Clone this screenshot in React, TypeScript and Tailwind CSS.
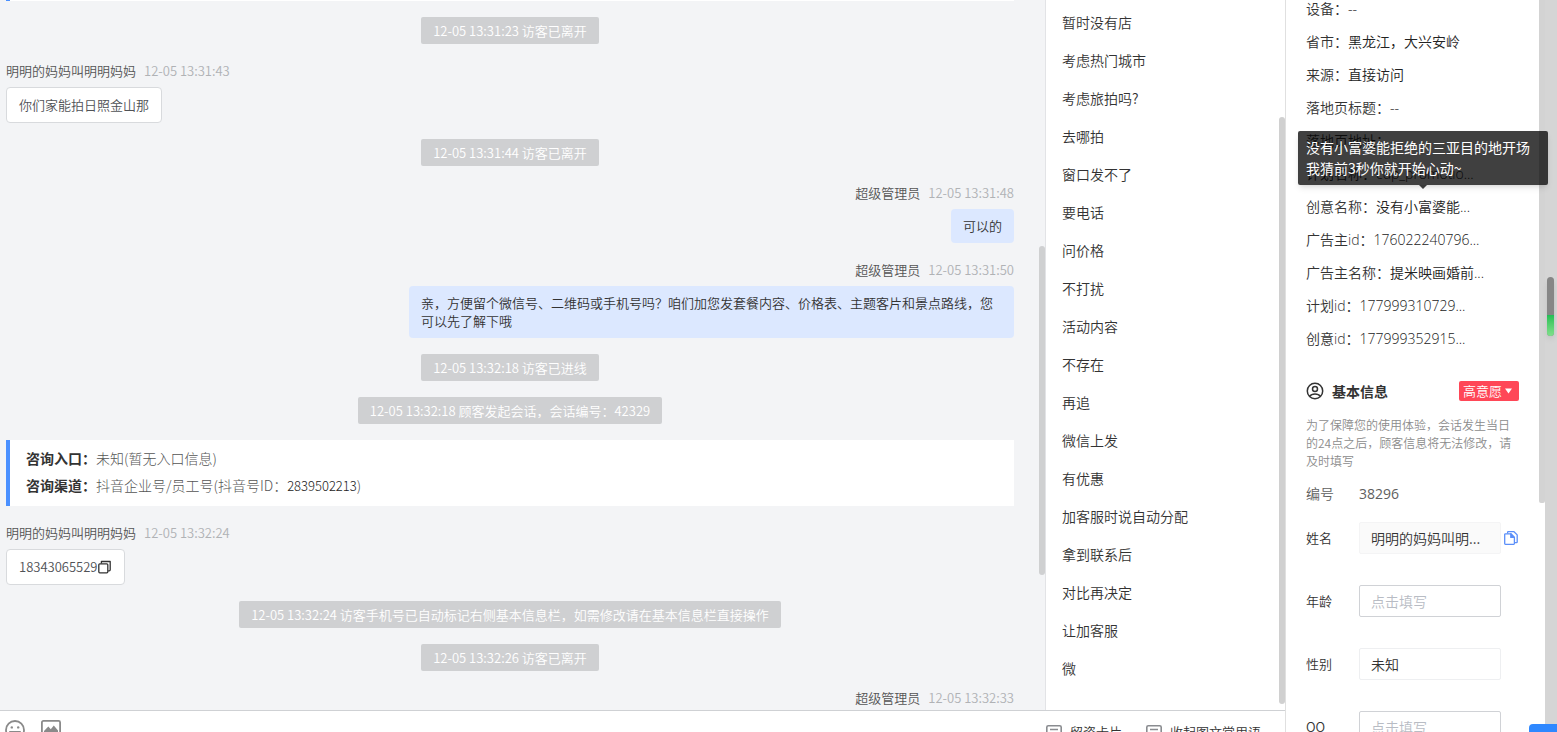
import type { ReactNode } from "react";

const PHRASES = [
  "暂时没有店",
  "考虑热门城市",
  "考虑旅拍吗?",
  "去哪拍",
  "窗口发不了",
  "要电话",
  "问价格",
  "不打扰",
  "活动内容",
  "不存在",
  "再追",
  "微信上发",
  "有优惠",
  "加客服时说自动分配",
  "拿到联系后",
  "对比再决定",
  "让加客服",
  "微",
];

const VISITOR_DETAILS = [
  ["设备", "--"],
  ["省市", "黑龙江，大兴安岭"],
  ["来源", "直接访问"],
  ["落地页标题", "--"],
  ["落地页地址", ""],
  ["计划名称", "cdp_promotio..."],
  ["创意名称", "没有小富婆能..."],
  ["广告主id", "176022240796..."],
  ["广告主名称", "提米映画婚前..."],
  ["计划id", "177999310729..."],
  ["创意id", "177999352915..."],
];

function Notice({ children }: { children: ReactNode }) {
  return (
    <p className="self-center rounded-xs bg-[#cfd0d2] px-3 text-[13px] leading-[27px] text-white">
      {children}
    </p>
  );
}

type MessageProps = {
  author: string;
  time: string;
  mine?: boolean;
  children?: ReactNode;
};

function Message({ author, time, mine = false, children }: MessageProps) {
  return (
    <article className={mine ? "flex flex-col items-end" : "flex flex-col items-start"}>
      <header className="mb-[5px] flex gap-2 text-[13px] leading-[22px]">
        <span className="text-[#555555]">{author}</span>
        <time className="text-[#b0b2b5]">{time}</time>
      </header>
      {children && (
        <div
          className={
            mine
              ? "max-w-[605px] rounded-sm bg-[#dce8ff] px-3 py-2 text-[13px] leading-[18px] text-[#333333]"
              : "flex items-center rounded-sm border border-[#d8dadd] bg-white px-3 py-2 text-[13px] leading-[18px] text-[#505256]"
          }
        >
          {children}
        </div>
      )}
    </article>
  );
}

function CopyIcon() {
  return (
    <svg className="size-3.5" viewBox="0 0 14 14" fill="none" stroke="#333" strokeWidth="1.3" strokeLinejoin="round">
      <rect x="0.8" y="3.8" width="9" height="9" rx="1" />
      <path d="M3.4 3.5V1.5H12.2V9.8a1 1 0 0 1-1 1H10.1" />
    </svg>
  );
}

function FileCopyIcon() {
  return (
    <svg className="size-3.5" viewBox="0 0 14 14" fill="none" stroke="#5b8ff9" strokeWidth="1.3" strokeLinejoin="round">
      <path d="M1.4 2.8H6.8L10.4 6.4V12.6a.7.7 0 0 1-.7.7H1.4a.7.7 0 0 1-.7-.7V3.5a.7.7 0 0 1 .7-.7Z" />
      <path d="M6.8 2.8V6.4H10.4Z" fill="#5b8ff9" />
      <path d="M3.6 2.6V1.3a.6.6 0 0 1 .6-.6H10L13.2 3.9V11a.7.7 0 0 1-.7.7H10.6" />
    </svg>
  );
}

function UserIcon() {
  return (
    <svg className="size-[18px]" viewBox="0 0 18 18" fill="none" stroke="#333" strokeWidth="1.5">
      <circle cx="9" cy="9" r="7.7" />
      <circle cx="9" cy="7" r="2.5" />
      <path d="M3.6 14.3C5 12.3 6.8 11.9 9 11.9s4 .4 5.4 2.4" />
    </svg>
  );
}

function SmileIcon() {
  return (
    <svg className="size-5" viewBox="0 0 20 20" fill="none" stroke="#8a8a8a" strokeWidth="1.8">
      <circle cx="10" cy="10" r="9" />
      <circle cx="6.8" cy="7.4" r="1.2" fill="#8a8a8a" stroke="none" />
      <circle cx="13.2" cy="7.4" r="1.2" fill="#8a8a8a" stroke="none" />
      <path d="M5.2 11.8H14.8A4.9 4.9 0 0 1 5.2 11.8Z" />
    </svg>
  );
}

function PictureIcon() {
  return (
    <svg className="size-5" viewBox="0 0 20 20" fill="none" stroke="#8a8a8a" strokeWidth="1.8">
      <rect x="0.9" y="0.9" width="18.2" height="17" rx="1.5" />
      <path d="M3 15V11L7.3 6.6 9.8 9.3 12.8 5.4 17 10.5V15Z" fill="#8a8a8a" stroke="none" />
    </svg>
  );
}

function NoteIcon() {
  return (
    <svg className="size-4" viewBox="0 0 16 16" fill="none" stroke="#8a8c90" strokeWidth="1.6">
      <rect x="0.8" y="1.8" width="14.4" height="12.4" rx="1.5" />
      <path d="M4 5.5H12M4 9H9" />
    </svg>
  );
}

function TextField({ id, label }: { id: string; label: string }) {
  return (
    <div className="flex items-center">
      <label htmlFor={id} className="w-[53px] text-[13px]">
        {label}
      </label>
      <input
        id={id}
        placeholder="点击填写"
        className="h-8 w-[142px] rounded-xs border border-[#d0d2d6] px-[11px] text-sm outline-none placeholder:text-[#b8bcc4]"
      />
    </div>
  );
}

function Conversation() {
  return (
    <section className="flex min-w-0 flex-1 bg-[#f3f4f6] pl-1.5">
      <div className="flex min-w-0 flex-1 flex-col gap-4 overflow-hidden pr-[25px]">
        <div className="h-px shrink-0 border-l-4 border-[#4a90ff] bg-white" />
        <Notice>12-05 13:31:23 访客已离开</Notice>
        <Message author="明明的妈妈叫明明妈妈" time="12-05 13:31:43">
          你们家能拍日照金山那
        </Message>
        <Notice>12-05 13:31:44 访客已离开</Notice>
        <Message mine author="超级管理员" time="12-05 13:31:48">
          可以的
        </Message>
        <Message mine author="超级管理员" time="12-05 13:31:50">
          亲，方便留个微信号、二维码或手机号吗？咱们加您发套餐内容、价格表、主题客片和景点路线，您可以先了解下哦
        </Message>
        <Notice>12-05 13:32:18 访客已进线</Notice>
        <Notice>12-05 13:32:18 顾客发起会话，会话编号：42329</Notice>
        <dl className="border-l-4 border-[#4a90ff] bg-white px-4 pt-[5px] pb-[7px] text-sm leading-[27px]">
          <div className="flex">
            <dt className="font-bold text-[#333333]">咨询入口：</dt>
            <dd className="font-light text-[#555555]">未知(暂无入口信息)</dd>
          </div>
          <div className="flex">
            <dt className="font-bold text-[#333333]">咨询渠道：</dt>
            <dd className="font-light text-[#555555]">
              抖音企业号/员工号(抖音号ID：<span className="text-[13px] text-[#222222]">2839502213</span>)
            </dd>
          </div>
        </dl>
        <Message author="明明的妈妈叫明明妈妈" time="12-05 13:32:24">
          18343065529
          <button type="button" aria-label="复制">
            <CopyIcon />
          </button>
        </Message>
        <Notice>12-05 13:32:24 访客手机号已自动标记右侧基本信息栏，如需修改请在基本信息栏直接操作</Notice>
        <Notice>12-05 13:32:26 访客已离开</Notice>
        <Message mine author="超级管理员" time="12-05 13:32:33" />
      </div>
      <div className="w-1.5 shrink-0 pt-[246px]">
        <div className="h-[329px] rounded-full bg-[#cfd0d1]" />
      </div>
    </section>
  );
}

function PhraseList() {
  return (
    <nav className="flex w-60 shrink-0 border-l border-[#e2e3e6]">
      <ul className="min-w-0 flex-1 pt-[3px]">
        {PHRASES.map((phrase) => (
          <li key={phrase}>
            <button type="button" className="block w-full px-4 text-left text-sm leading-[38px] text-[#333333]">
              {phrase}
            </button>
          </li>
        ))}
      </ul>
      <div className="w-1.5 shrink-0 pt-[117px]">
        <div className="h-[587px] rounded-full bg-[#d0d0d0]" />
      </div>
    </nav>
  );
}

function Toolbar() {
  return (
    <footer className="flex h-[22px] shrink-0 items-start overflow-hidden border-t border-[#cfd1d4] pl-[5px] pr-6">
      <div className="flex gap-4 pt-[9px]">
        <button type="button" aria-label="表情">
          <SmileIcon />
        </button>
        <button type="button" aria-label="图片">
          <PictureIcon />
        </button>
      </div>
      <div className="ml-auto flex gap-6 pt-[11px] text-[13px] leading-5 text-[#333333]">
        <button type="button" className="flex items-center gap-2">
          <NoteIcon />
          留资卡片
        </button>
        <button type="button" className="flex items-center gap-2">
          <NoteIcon />
          收起图文常用语
        </button>
      </div>
    </footer>
  );
}

function VisitorPanel() {
  return (
    <aside className="relative flex w-[272px] shrink-0 overflow-hidden border-l border-[#e0e0e0] text-[#333333]">
      <div className="min-w-0 flex-1 pl-5">
        <dl className="-mt-2 font-['Open_Sans','Noto_Sans_CJK_SC',sans-serif] text-sm leading-[33px]">
          {VISITOR_DETAILS.map(([name, value]) => (
            <div key={name} className="flex">
              <dt>{name}：</dt>
              <dd className="text-[#222222]">{value}</dd>
            </div>
          ))}
        </dl>

        <div className="mt-[26px] flex h-5 items-center pr-5">
          <UserIcon />
          <h2 className="ml-2 text-sm font-bold">基本信息</h2>
          <button
            type="button"
            className="ml-auto flex items-center gap-[3px] rounded-xs bg-[#ff4757] px-1 text-[13px] leading-5 text-white"
          >
            高意愿
            <svg className="mr-[3px] h-[6px] w-[7px]" viewBox="0 0 7 6" fill="currentColor">
              <path d="M0 0.5H7L3.5 5.5Z" />
            </svg>
          </button>
        </div>

        <p className="mt-[15px] pr-5 text-xs leading-[18px] text-[#8c8c8c]">
          为了保障您的使用体验，会话发生当日的24点之后，顾客信息将无法修改，请及时填写
        </p>

        <div className="mt-[13px] flex font-['Open_Sans','Noto_Sans_CJK_SC',sans-serif] text-sm leading-[22px] text-[#606060]">
          <span className="w-[53px]">编号</span>
          <span className="font-normal">38296</span>
        </div>

        <form className="mt-[17px] flex flex-col gap-[31px]">
          <div className="flex items-center">
            <label htmlFor="name" className="w-[53px] text-[13px]">
              姓名
            </label>
            <input
              id="name"
              readOnly
              value="明明的妈妈叫明..."
              className="h-8 w-[142px] rounded-xs border border-[#f4f4f5] bg-[#fafafa] px-[11px] text-sm outline-none"
            />
            <button type="button" aria-label="复制姓名" className="ml-[3px]">
              <FileCopyIcon />
            </button>
          </div>
          <TextField id="age" label="年龄" />
          <div className="flex items-center">
            <label htmlFor="gender" className="w-[53px] text-[13px]">
              性别
            </label>
            <select
              id="gender"
              className="h-8 w-[142px] appearance-none rounded-xs border border-[#eeeff1] bg-white px-[11px] text-sm outline-none"
            >
              <option>未知</option>
              <option>男</option>
              <option>女</option>
            </select>
          </div>
          <TextField id="qq" label="QQ" />
        </form>
      </div>

      <div className="w-1.5 shrink-0">
        <div className="h-[503px] rounded-b-xs bg-[#d3d3d3]" />
      </div>
      <div className="w-3 shrink-0 bg-[#d5d5d5]" />

      <div
        role="tooltip"
        className="absolute left-3 top-[131px] w-[250px] rounded-xs bg-black/75 px-2 py-1.5 text-sm leading-[21px] font-normal text-white shadow-md"
      >
        没有小富婆能拒绝的三亚目的地开场我猜前3秒你就开始心动~
        <svg className="absolute left-1/2 top-full h-1 w-2 -translate-x-1/2" viewBox="0 0 8 4">
          <path d="M0 0H8L4 4Z" fill="#000" fillOpacity="0.75" />
        </svg>
      </div>

      <div className="absolute right-[3px] top-[277px] h-[59px] w-[7px] overflow-hidden rounded-full bg-[#868686] shadow-md">
        <div className="mt-[38px] h-[21px] bg-linear-to-b from-[#1fbf55] to-[#7fe08c]" />
      </div>

      <button
        type="button"
        aria-label="打开面板"
        className="absolute bottom-0 right-0 h-2 w-7 rounded-tl-sm bg-[#2f88ff] shadow-lg"
      />
    </aside>
  );
}

export default function App() {
  return (
    <div className="flex h-screen overflow-hidden bg-white font-['Noto_Sans_CJK_SC',sans-serif] font-[350]">
      <main className="flex min-w-0 flex-1 flex-col">
        <div className="flex min-h-0 flex-1 overflow-hidden">
          <Conversation />
          <PhraseList />
        </div>
        <Toolbar />
      </main>
      <VisitorPanel />
    </div>
  );
}
